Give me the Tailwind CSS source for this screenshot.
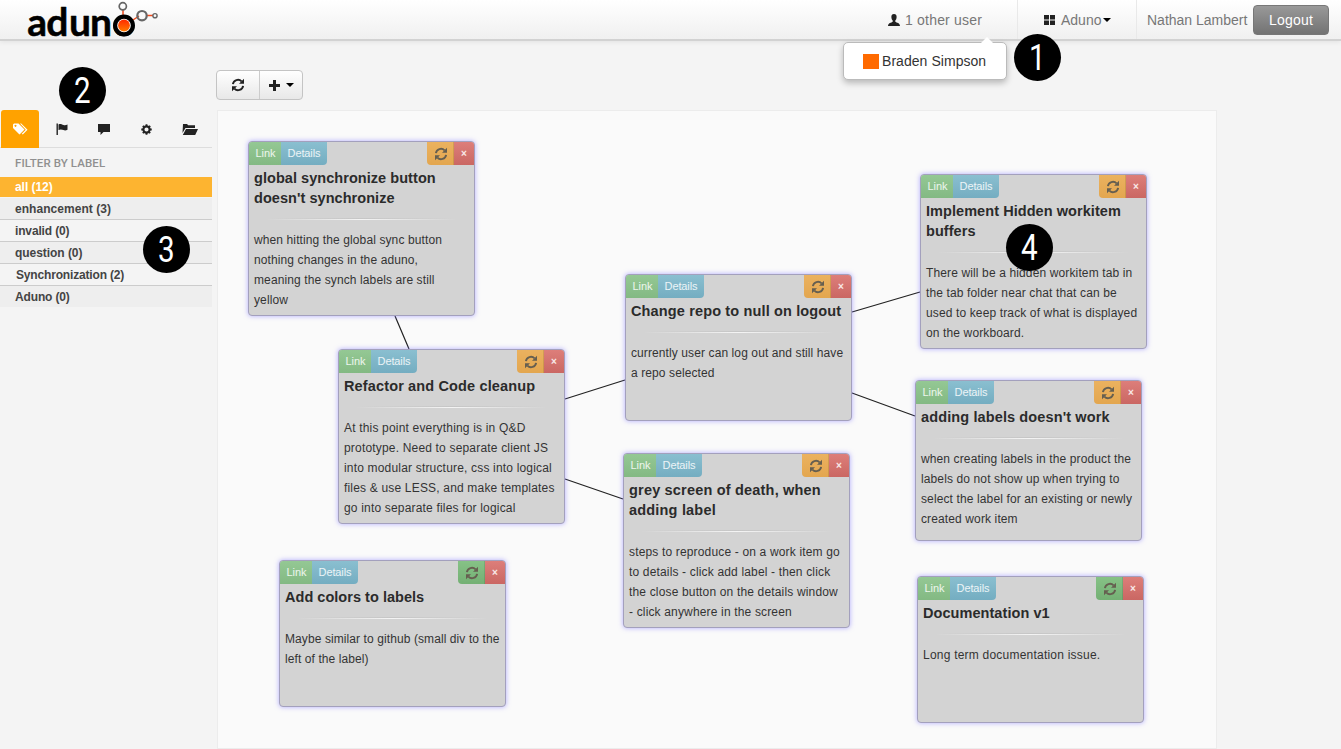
<!DOCTYPE html>
<html lang="en">
<head>
<meta charset="utf-8">
<title>Aduno</title>
<script src="https://cdn.jsdelivr.net/npm/@tailwindcss/browser@4"></script>
</head>
<body class="relative h-[749px] overflow-hidden bg-[#f4f4f4] font-['Liberation_Sans',sans-serif] text-[#333]">
<svg class="hidden">
  <symbol id="refresh" viewBox="0 0 14 14"><path d="M1.9 6.2A5.1 5.1 0 0 1 10.6 3.400M12.1 7.800A5.1 5.1 0 0 1 3.4 10.600" fill="none" stroke="currentColor" stroke-width="1.9"/><path d="M13 .8v5H8zM1 13.200v-5h5z" fill="currentColor"/></symbol>
</svg>

<header class="flex h-[41px] items-stretch border-b-2 border-[#d2d2d2] bg-linear-to-b from-white to-[#f0f0f0] shadow-[0_1px_5px_rgba(0,0,0,0.08)]">
  <svg class="ml-[20px] h-[39px] w-[150px] shrink-0 overflow-visible" viewBox="20 0 150 39">
    <defs><linearGradient id="sun" x2="0" y2="1"><stop offset="0" stop-color="#ff2a00"/><stop offset="1" stop-color="#ff7a00"/></linearGradient></defs>
    <path d="M123 10v8M133 20l6-4M147 15.500h6" stroke="#f04a1c" stroke-width="1.500"/>
    <g fill="none" stroke="#666"><circle cx="122.800" cy="6.300" r="3.600" stroke-width="1.700"/><circle cx="142" cy="15.700" r="4.700" stroke-width="2.200"/><circle cx="155" cy="15.700" r="2.100" stroke-width="1.400"/></g>
    <text x="27.200 46.300 69 90 112.500" y="36" font-family="Lato" font-weight="700" font-size="39" fill="#000" stroke="#000" stroke-width=".5" stroke-linejoin="round">aduno</text>
    <circle cx="124" cy="25.500" r="8.900" fill="#fff" stroke="#000" stroke-width="4.200"/>
    <circle cx="124" cy="25.500" r="5.900" fill="url(#sun)"/>
  </svg>
  <div class="ml-auto flex w-[129px] items-center pt-px text-[14px] text-[#777]">
    <svg class="mr-[5px] h-[12px] w-[12px] fill-[#222]" viewBox="0 0 12 12"><path d="M6 0C3.900 0 3.200 1.500 3.400 3.500 3.500 5 4.200 6 4.700 6.500v1.200C3.500 8.700 0 8.800 0 12h12c0-3.200-3.500-3.300-4.700-4.300V6.500C7.800 6 8.500 5 8.600 3.500 8.800 1.500 8.100 0 6 0z"/></svg>
    <span class="tracking-[0.2px]">1 other user</span>
  </div>
  <div class="flex w-[119px] items-center border-l border-[#e9e9e9] pt-px pl-[26px] text-[14px] text-[#777]">
    <svg class="mr-[6px] h-[10px] w-[11px] fill-[#222]" viewBox="0 0 11 10"><path d="M0 0h5v4.500H0zM6 0h5v4.500H6zM0 5.500h5V10H0zM6 5.500h5V10H6z"/></svg>
    <span>Aduno</span>
    <i class="ml-[2px] border-x-4 border-t-4 border-x-transparent border-t-black"></i>
  </div>
  <div class="flex w-[205px] items-center border-l border-[#e9e9e9] pt-px pl-[10px] text-[14px] text-[#777]">
    <span class="w-[106px] whitespace-nowrap">Nathan Lambert</span>
    <span class="flex h-[30px] w-[76px] items-center justify-center rounded-[4px] border border-[#777] bg-linear-to-b from-[#999] to-[#737373] tracking-[0.2px] text-white">Logout</span>
  </div>
</header>

<div class="flex h-[708px]">
  <aside class="w-[212px] shrink-0 pt-[69px] text-[12px] font-bold">
    <nav class="flex h-[38px] items-center border-b border-[#ddd] text-[#222]">
      <span class="ml-px flex h-[38px] w-[38px] items-center justify-center rounded-t-[3px] bg-[#ffa200] text-white">
        <svg class="h-[12px] w-[15px]" viewBox="0 0 15 12" fill="currentColor"><path fill-rule="evenodd" d="M0 1.500 1 .500h4.500l6 6-5 5L0 5zM2.500 1.800a1 1 0 1 0 .01 0z"/><path d="M7 .500h1.200l6.300 6.300-4.700 4.700-1-.800 4-4z"/></svg>
      </span>
      <span class="flex w-[45px] justify-center pt-px"><svg class="h-[12px] w-[12px]" viewBox="0 0 12 12" fill="currentColor"><path d="M.5.500h1.400V12H.5zM2.500 1.500c2-1.200 3.500 0 5 .5s2.500.2 4-.5v5.200c-1.500.8-2.700.9-4 .4s-3-1.300-5 0z"/></svg></span>
      <span class="flex w-[40px] justify-center pt-[2px]"><svg class="h-[11px] w-[12px]" viewBox="0 0 12 11" fill="currentColor"><path d="M0 0h12v8H5.500L2.500 11V8H0z"/></svg></span>
      <span class="flex w-[44px] justify-center pt-px"><svg class="h-[11px] w-[11px]" viewBox="0 0 12 12" fill="none" stroke="currentColor"><circle cx="6" cy="6" r="3.400" stroke-width="2.300"/><path d="M6 .3v2M6 9.700v2M.3 6h2M9.700 6h2M2 2l1.400 1.400M8.600 8.600 10 10M2 10l1.400-1.400M8.600 3.400 10 2" stroke-width="2"/></svg></span>
      <span class="flex w-[43px] justify-center pt-[2px]"><svg class="h-[11px] w-[16px]" viewBox="0 0 16 11" fill="currentColor"><path d="M1 0h4l1.200 1.300H13V4H3.500L.5 9zM4 5h12l-2.800 6H.8z"/></svg></span>
    </nav>
    <h2 class="flex h-[29px] items-center pt-[2px] pl-[15px] font-[Roboto,sans-serif] text-[11.5px] font-medium tracking-[0.1px] text-[#909090]">FILTER BY LABEL</h2>
    <ul class="tracking-[-0.05px] text-[#444]">
      <li class="h-[20px] bg-[#fdb430] pl-[15px] leading-[20px] text-white">all (12)</li>
      <li class="mt-px h-[22px] border-b border-[#ccc] bg-[#eee] pl-[15px] leading-[22px] tracking-[0.05px]">enhancement (3)</li>
      <li class="h-[22px] border-b border-[#ccc] pl-[15px] leading-[22px] tracking-[-0.15px]">invalid (0)</li>
      <li class="h-[22px] border-b border-[#ccc] bg-[#eee] pl-[15px] leading-[22px]">question (0)</li>
      <li class="h-[22px] border-b border-[#ccc] pl-[16px] leading-[22px] tracking-[-0.17px]">Synchronization (2)</li>
      <li class="h-[21px] bg-[#eee] pl-[15px] leading-[22px] tracking-[-0.15px]">Aduno (0)</li>
    </ul>
  </aside>

  <main class="ml-[4px] flex flex-col pt-[29px]">
    <div class="flex h-[30px] w-[87px] rounded-[4px] border border-[#c4c4c4] bg-linear-to-b from-white to-[#e8e8e8] text-[#222]">
      <span class="flex w-[43px] items-center justify-center border-r border-[#ccc]"><svg class="h-[14px] w-[14px]"><use href="#refresh"/></svg></span>
      <span class="flex flex-1 items-center justify-center gap-[6px]">
        <svg class="h-[11px] w-[11px]" viewBox="0 0 11 11"><path d="M5.500 0v11M0 5.500h11" stroke="currentColor" stroke-width="3"/></svg>
        <i class="border-x-4 border-t-4 border-x-transparent border-t-black"></i>
      </span>
    </div>
    <section class="mt-[10px] ml-px h-[639px] w-[1000px] border border-[#ececec] bg-[#fafafa]"></section>
  </main>
</div>

<div id="board" class="absolute inset-0">
  <svg class="absolute inset-0 h-full w-full" stroke="#222" stroke-width="1.200"><path d="M395 316 409 349M565 399l60-19M565 479l58 20M852 312l68-20M852 393l63 23"/></svg>
</div>

<div class="absolute top-[42px] left-[843px] flex h-[38px] w-[164px] items-center rounded-[5px] border border-[#bbb] bg-white pl-[19px] text-[14px] shadow-[0_3px_6px_rgba(0,0,0,0.25)]">
  <i class="absolute -top-[6px] left-[137px] border-x-6 border-b-6 border-x-transparent border-b-white"></i>
  <i class="mr-[3px] h-[15px] w-[16px] bg-[#ff6a00]"></i><span class="tracking-[0.05px]">Braden Simpson</span>
</div>

<div id="markers"></div>

<script>
const cards = [
  [248, 141, 175, 'orange', ['global synchronize button', "doesn't synchronize"], ['when hitting the global sync button', 'nothing changes in the aduno,', 'meaning the synch labels are still', 'yellow'], 0.11, 0.05],
  [338, 349, 175, 'orange', ['Refactor and Code cleanup'], ['At this point everything is in Q&amp;D', 'prototype. Need to separate client JS', 'into modular structure, css into logical', 'files &amp; use LESS, and make templates', 'go into separate files for logical'], 0.18, 0.14],
  [279, 560, 147, 'green', ['Add colors to labels'], ['Maybe similar to github (small div to the', 'left of the label)'], 0.09, 0.03],
  [625, 274, 147, 'orange', ['Change repo to null on logout'], ['currently user can log out and still have', 'a repo selected'], 0.1, 0.14],
  [623, 453, 175, 'orange', ['grey screen of death, when', 'adding label'], ['steps to reproduce - on a work item go', 'to details - click add label - then click', 'the close button on the details window', '- click anywhere in the screen'], 0.16, 0.19],
  [920, 174, 175, 'orange', ['Implement Hidden workitem', 'buffers'], ['There will be a hidden workitem tab in', 'the tab folder near chat that can be', 'used to keep track of what is displayed', 'on the workboard.'], 0.13, 0.06],
  [915, 380, 161, 'orange', ["adding labels doesn't work"], ['when creating labels in the product the', 'labels do not show up when trying to', 'select the label for an existing or newly', 'created work item'], 0.12, 0.12],
  [917, 576, 147, 'green', ['Documentation v1'], ['Long term documentation issue.'], 0.22, 0.06]
];
const syncColor = {
  orange: 'bg-linear-to-b from-[#ebb25f] to-[#e3a64f]',
  green: 'bg-linear-to-b from-[#86c286] to-[#74b074]'
};
document.getElementById('board').insertAdjacentHTML('beforeend', cards.map(([x, y, h, c, title, body, spacing, titleSpacing]) => `
<article class="absolute w-[227px] overflow-hidden rounded-[4px] border border-[#a3a0bd] bg-[#d3d3d3] shadow-[0_0_5px_rgba(130,120,255,0.6)]" style="left:${x}px;top:${y}px;height:${h}px">
  <div class="flex h-[23px] text-[11px] text-white/85">
    <span class="flex w-[32px] items-center justify-center bg-linear-to-b from-[#94c894] to-[#83b983] pl-px">Link</span>
    <span class="flex w-[46px] items-center justify-center rounded-br-[4px] bg-linear-to-b from-[#8abfd0] to-[#74adc1] tracking-[-0.1px]">Details</span>
    <span class="ml-auto flex w-[27px] items-center justify-center rounded-bl-[4px] border-r border-black/10 pl-px text-[#665f50] ${syncColor[c]}"><svg class="h-[14px] w-[14px]"><use href="#refresh"/></svg></span>
    <span class="flex w-[20px] items-center justify-center bg-linear-to-b from-[#dd7e7a] to-[#ca6763] text-[10px] font-bold">×</span>
  </div>
  <div class="px-[5px] pt-[3px] whitespace-nowrap">
    <h3 class="text-[14.5px] leading-[20px] font-bold text-[#2b2b2b]" style="letter-spacing:${titleSpacing}px">${title.join('<br>')}</h3>
    <div class="mx-[16px] mt-[10px] h-px bg-linear-to-r from-transparent from-0% via-[#c6c6c6] via-50% to-transparent to-100%"></div>
    <div class="mx-[12px] h-px bg-linear-to-r from-transparent via-[#f4f4f4] to-transparent"></div>
    <p class="mt-[10px] text-[12px] leading-[20px] text-[#333]" style="letter-spacing:${spacing}px">${body.join('<br>')}</p>
  </div>
</article>`).join(''));
document.getElementById('markers').innerHTML = [[1, 1037.5, 57.5], [2, 82.5, 90.5], [3, 166.5, 249.5], [4, 1029.5, 247.5]].map(([n, x, y]) => `
<div class="absolute flex h-[47px] w-[47px] items-center justify-center rounded-full bg-black font-[Roboto,sans-serif] text-[37px] leading-none text-white" style="left:${x - 23.5}px;top:${y - 23.5}px"><span class="scale-x-80">${n}</span></div>`).join('');
</script>
</body>
</html>
